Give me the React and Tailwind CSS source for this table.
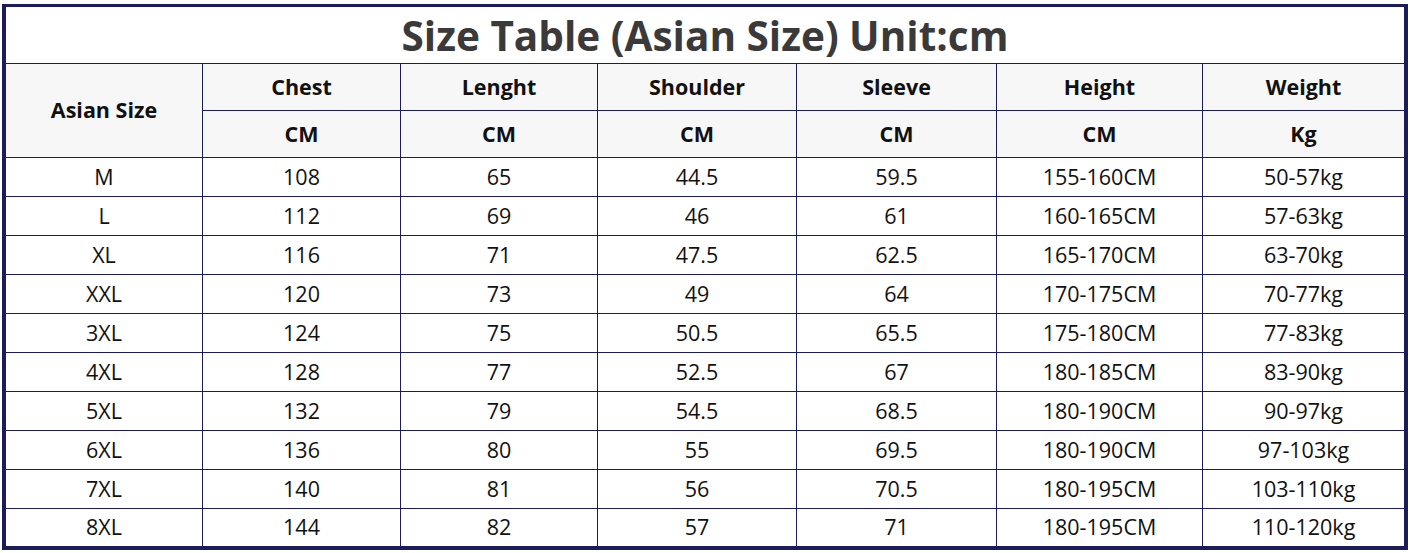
import React from "react";

// Size chart data
const COLUMNS = [
  { name: "Chest", unit: "CM" },
  { name: "Lenght", unit: "CM" },
  { name: "Shoulder", unit: "CM" },
  { name: "Sleeve", unit: "CM" },
  { name: "Height", unit: "CM" },
  { name: "Weight", unit: "Kg" },
];

const ROWS = [
  ["M", "108", "65", "44.5", "59.5", "155-160CM", "50-57kg"],
  ["L", "112", "69", "46", "61", "160-165CM", "57-63kg"],
  ["XL", "116", "71", "47.5", "62.5", "165-170CM", "63-70kg"],
  ["XXL", "120", "73", "49", "64", "170-175CM", "70-77kg"],
  ["3XL", "124", "75", "50.5", "65.5", "175-180CM", "77-83kg"],
  ["4XL", "128", "77", "52.5", "67", "180-185CM", "83-90kg"],
  ["5XL", "132", "79", "54.5", "68.5", "180-190CM", "90-97kg"],
  ["6XL", "136", "80", "55", "69.5", "180-190CM", "97-103kg"],
  ["7XL", "140", "81", "56", "70.5", "180-195CM", "103-110kg"],
  ["8XL", "144", "82", "57", "71", "180-195CM", "110-120kg"],
];

const GRID = "grid grid-cols-[197px_198px_197px_199px_200px_206px_201px]";

const App = () => {
  return (
    <div className="w-[1410px] h-[553px] bg-white pt-[4px] pl-[2px]" style={{ fontFamily: "'Open Sans', sans-serif" }}>
      <div className="w-[1406px] h-[546px] border-[4px] border-t-[3px] border-[#1c1c5c] flex flex-col">
        {/* Title */}
        <div className="h-[57px] border-b border-[#1c1c5c] flex items-center justify-center text-[40.5px] font-bold text-[#3a3a3a] leading-none pt-[2px]">
          Size Table (Asian Size) Unit:cm
        </div>

        {/* Header */}
        <div className={`${GRID} grid-rows-[47px_47px] bg-[#f7f7f7] text-[21.5px] font-bold text-[#111]`}>
          <div className="row-span-2 border-r border-b border-[#1c1c5c] flex items-center justify-center">Asian Size</div>
          {COLUMNS.map((c, i) => (
            <div key={c.name} className={`border-b border-[#1c1c5c] flex items-center justify-center ${i < COLUMNS.length - 1 ? "border-r" : ""}`}>
              {c.name}
            </div>
          ))}
          {COLUMNS.map((c, i) => (
            <div key={c.name + "-u"} className={`border-b border-[#1c1c5c] flex items-center justify-center ${i < COLUMNS.length - 1 ? "border-r" : ""}`}>
              {c.unit}
            </div>
          ))}
        </div>

        {/* Body */}
        <div className="flex-1 flex flex-col text-[21.5px] text-[#111]">
          {ROWS.map((r, ri) => (
            <div key={r[0]} className={`${GRID} ${ri < ROWS.length - 1 ? "h-[39px] border-b border-[#1c1c5c]" : "flex-1"}`}>
              {r.map((v, ci) => (
                <div key={ci} className={`flex items-center justify-center border-[#1c1c5c] ${ci < r.length - 1 ? "border-r" : ""}`}>
                  {v}
                </div>
              ))}
            </div>
          ))}
        </div>
      </div>
    </div>
  );
};

export default App;
